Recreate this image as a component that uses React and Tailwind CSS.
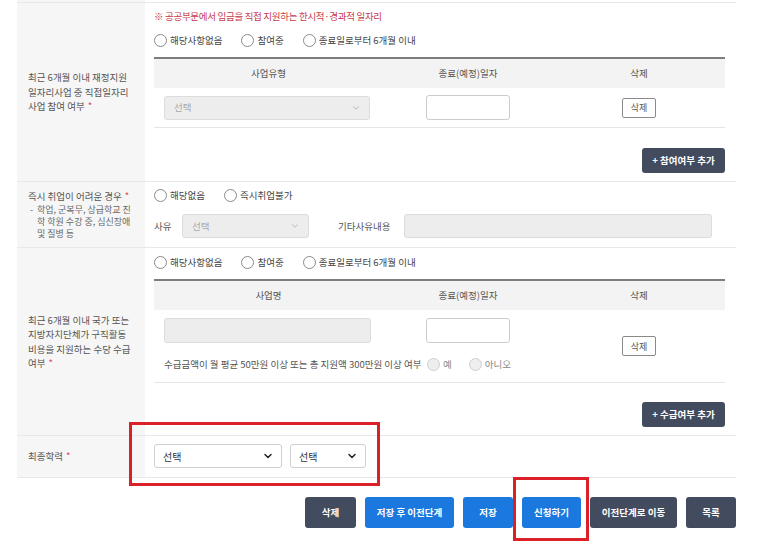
import React from 'react';
import { ChevronDown } from 'lucide-react';

const FONT = { fontFamily: '"Noto Sans CJK KR", "Noto Sans", sans-serif' };

// radio circle + label
const Radio = ({ label, disabled }) => (
  <label className="flex items-center gap-[3px]">
    <span
      className={`w-[13px] h-[13px] rounded-full border ${
        disabled ? 'border-[#cfcfcf] bg-[#eeeeee]' : 'border-[#8a8a8a] bg-white'
      }`}
    />
    <span className={disabled ? 'text-[#888]' : 'text-[#444]'}>{label}</span>
  </label>
);

const Req = () => <span className="text-[#e2415c] ml-[3px]">*</span>;

const DisabledSelect = ({ className }) => (
  <div
    className={`flex items-center justify-between h-[24px] rounded-[3px] border border-[#dcdcdc] bg-[#ededed] pl-[9px] pr-[8px] text-[#aaa] ${className}`}
  >
    <span>선택</span>
    <ChevronDown size={10} strokeWidth={1.5} className="text-[#999]" />
  </div>
);

const SmallDelete = () => (
  <button className="h-[20px] w-[34px] border border-[#8a8a8a] rounded-[2px] bg-white text-[#555] text-[9px] leading-none">
    삭제
  </button>
);

const DateInput = () => (
  <div className="w-[84px] h-[25px] rounded-[3px] border border-[#cccccc] bg-white" />
);

const AddButton = ({ label }) => (
  <div className="flex justify-end">
    <button className="h-[25px] w-[83px] rounded-[3px] bg-[#434c5f] text-white font-bold text-[9.5px] leading-none">
      + {label}
    </button>
  </div>
);

const TableHead = ({ first }) => (
  <div className="grid grid-cols-[229px_170px_172px] h-[31px] border-t-2 border-[#7d7d7d] bg-[#f3f3f3] text-[#555] items-center text-center">
    <span>{first}</span>
    <span>종료(예정)일자</span>
    <span>삭제</span>
  </div>
);

const Label = ({ children }) => (
  <div className="w-[128px] shrink-0 bg-[#f6f6f6] flex items-center pl-[11px] pr-[6px] text-[#555] leading-[14.5px]">
    <div>{children}</div>
  </div>
);

const BottomButton = ({ label, color, width }) => (
  <button
    className={`h-[31px] rounded-[3px] text-white font-bold text-[9.5px] leading-none ${color} ${width}`}
  >
    {label}
  </button>
);

export default function App() {
  return (
    <div className="relative w-[773px] h-[559px] bg-white overflow-hidden text-[9.5px]" style={FONT}>
      <div className="ml-[17px] w-[719px]">
        {/* tail of previous row */}
        <div className="flex h-[3px] border-b border-[#e8e8e8]">
          <div className="w-[128px] bg-[#f6f6f6]" />
        </div>

        {/* 재정지원 일자리사업 */}
        <div className="flex border-b border-[#e8e8e8]">
          <Label>
            최근 6개월 이내 재정지원
            <br />
            일자리사업 중 직접일자리
            <br />
            사업 참여 여부<Req />
          </Label>
          <div className="flex-1 pl-[9px] pr-[11px] pt-[5px] pb-[8px]">
            <div className="h-[16px] leading-[16px] text-[#c73a4a] tracking-[-0.3px]">
              ※ 공공부문에서 임금을 직접 지원하는 한시적·경과적 일자리
            </div>
            <div className="mt-[8px] h-[16px] flex items-center gap-[19px]">
              <Radio label="해당사항없음" />
              <Radio label="참여중" />
              <Radio label="종료일로부터 6개월 이내" />
            </div>
            <div className="mt-[9px]">
              <TableHead first="사업유형" />
              <div className="grid grid-cols-[229px_170px_172px] h-[40px] items-center border-b border-[#e5e5e5]">
                <div className="pl-[10px] pr-[13px]">
                  <DisabledSelect />
                </div>
                <div className="flex justify-center">
                  <DateInput />
                </div>
                <div className="flex justify-center">
                  <SmallDelete />
                </div>
              </div>
            </div>
            <div className="mt-[20px]">
              <AddButton label="참여여부 추가" />
            </div>
          </div>
        </div>

        {/* 즉시 취업 */}
        <div className="flex border-b border-[#e8e8e8]">
          <Label>
            <div className="leading-[14px]">
              즉시 취업이 어려운 경우<Req />
            </div>
            <div className="flex text-[9px] leading-[12px] text-[#666] mt-[1px]">
              <span className="w-[9px] shrink-0 pl-[2px]">-</span>
              <span className="whitespace-nowrap">
                학업, 군복무, 상급학교 진
                <br />
                학 학원 수강 중, 심신장애
                <br />및 질병 등
              </span>
            </div>
          </Label>
          <div className="flex-1 pl-[9px] pr-[11px] pt-[5px] pb-[9px]">
            <div className="h-[16px] flex items-center gap-[19px]">
              <Radio label="해당없음" />
              <Radio label="즉시취업불가" />
            </div>
            <div className="mt-[11px] flex items-center text-[#555]">
              <span className="w-[28px]">사유</span>
              <DisabledSelect className="w-[127px]" />
              <span className="ml-[29px] w-[66px]">기타사유내용</span>
              <div className="w-[308px] h-[24px] rounded-[3px] border border-[#dcdcdc] bg-[#ededed]" />
            </div>
          </div>
        </div>

        {/* 구직활동 수당 */}
        <div className="flex border-b border-[#e8e8e8]">
          <Label>
            최근 6개월 이내 국가 또는
            <br />
            지방자치단체가 구직활동
            <br />
            비용을 지원하는 수당 수급
            <br />
            여부<Req />
          </Label>
          <div className="flex-1 pl-[9px] pr-[11px] pt-[6px] pb-[8px]">
            <div className="h-[16px] flex items-center gap-[19px]">
              <Radio label="해당사항없음" />
              <Radio label="참여중" />
              <Radio label="종료일로부터 6개월 이내" />
            </div>
            <div className="mt-[9px]">
              <TableHead first="사업명" />
              <div className="grid grid-cols-[229px_170px_172px] h-[73px] border-b border-[#e5e5e5]">
                <div className="col-span-2 flex flex-col pt-[8px] pl-[10px]">
                  <div className="flex">
                    <div className="w-[207px] h-[25px] rounded-[3px] border border-[#dcdcdc] bg-[#ededed]" />
                    <div className="ml-[55px]">
                      <DateInput />
                    </div>
                  </div>
                  <div className="mt-[14px] flex items-center text-[#555]">
                    <span className="w-[263px]">수급금액이 월 평균 50만원 이상 또는 총 지원액 300만원 이상 여부</span>
                    <div className="flex items-center gap-[17px]">
                      <Radio label="예" disabled />
                      <Radio label="아니오" disabled />
                    </div>
                  </div>
                </div>
                <div className="flex items-center justify-center">
                  <SmallDelete />
                </div>
              </div>
            </div>
            <div className="mt-[19px]">
              <AddButton label="수급여부 추가" />
            </div>
          </div>
        </div>

        {/* 최종학력 */}
        <div className="flex border-b border-[#e8e8e8]">
          <Label>
            최종학력<Req />
          </Label>
          <div className="flex-1 pl-[9px] pt-[8px] pb-[9px] flex gap-[8px]">
            <div className="w-[128px] h-[24px] rounded-[3px] border border-[#cfcfcf] bg-white flex items-center justify-between pl-[8px] pr-[7px] text-[10px] text-[#333]">
              <span>선택</span>
              <ChevronDown size={12} strokeWidth={3} className="text-[#222]" />
            </div>
            <div className="w-[76px] h-[24px] rounded-[3px] border border-[#cfcfcf] bg-white flex items-center justify-between pl-[8px] pr-[7px] text-[10px] text-[#333]">
              <span>선택</span>
              <ChevronDown size={12} strokeWidth={3} className="text-[#222]" />
            </div>
          </div>
        </div>

        {/* bottom buttons */}
        <div className="mt-[19px] flex justify-end gap-[9px]">
          <BottomButton label="삭제" color="bg-[#434c5f]" width="w-[51px]" />
          <BottomButton label="저장 후 이전단계" color="bg-[#1b78de]" width="w-[89px]" />
          <BottomButton label="저장" color="bg-[#1b78de]" width="w-[50px]" />
          <BottomButton label="신청하기" color="bg-[#1b78de]" width="w-[59px]" />
          <BottomButton label="이전단계로 이동" color="bg-[#434c5f]" width="w-[87px]" />
          <BottomButton label="목록" color="bg-[#434c5f]" width="w-[50px]" />
        </div>
      </div>

      {/* red highlight annotations */}
      <div className="absolute left-[129px] top-[422px] w-[251px] h-[64px] border-[3.5px] border-[#dc2027]" />
      <div className="absolute left-[513px] top-[477px] w-[76px] h-[64px] border-[3.5px] border-[#dc2027]" />
    </div>
  );
}
